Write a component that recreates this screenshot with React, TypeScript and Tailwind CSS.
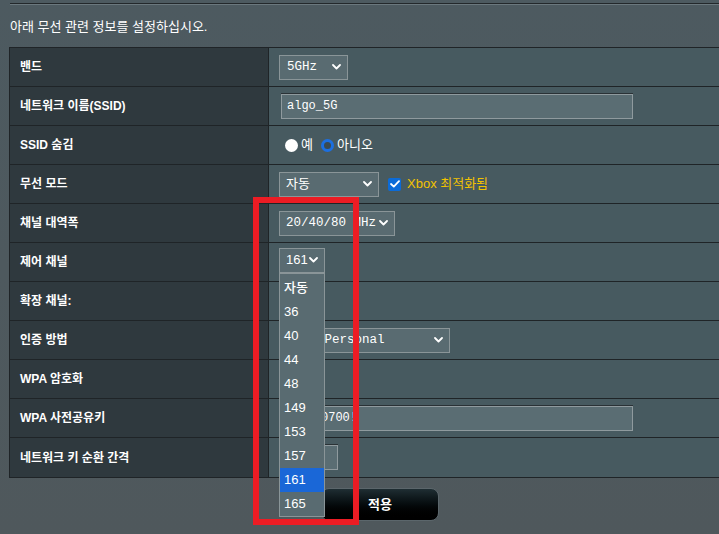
import { ReactNode } from "react";

const sans = "font-['Liberation_Sans','Noto_Sans_CJK_KR',sans-serif]";
const mono = "font-['Liberation_Mono','DejaVu_Sans_Mono',monospace]";

function Chevron() {
	return (
		<svg width="9" height="6" viewBox="0 0 9 6" fill="none">
			<path d="M1 1L4.5 4.5L8 1" stroke="white" strokeWidth="1.8" strokeLinecap="round" strokeLinejoin="round" />
		</svg>
	);
}

function Select({ width, children, className = "" }: { width: string; children: ReactNode; className?: string }) {
	return (
		<div
			className={`${width} h-[25px] bg-[#596b71] border border-[#8a9598] flex items-center justify-between pl-[6px] pr-[6px] text-white ${className}`}
		>
			<span className="whitespace-nowrap overflow-hidden">{children}</span>
			<Chevron />
		</div>
	);
}

function TextInput({ width, value, pad = "pl-[5px]" }: { width: string; value: string; pad?: string }) {
	return (
		<div
			className={`${width} h-[25px] ml-[2px] bg-[#5a6d73] border border-[#8f9a9e] shadow-[0_-1px_0_#2a3236] flex items-center ${pad} text-white text-[12px] whitespace-nowrap overflow-hidden ${mono}`}
		>
			{value}
		</div>
	);
}

function Row({ label, children, last = false }: { label: string; children?: ReactNode; last?: boolean }) {
	return (
		<div className={`h-[39px] flex ${last ? "" : "border-b border-[#1f2427]"}`}>
			<div className={`w-[259px] shrink-0 bg-[#2f393e] border-r border-[#1f2427] flex items-center pl-[10px] text-white text-[12px] font-semibold ${sans}`}>
				{label}
			</div>
			<div className="flex-1 bg-[#475a60] flex items-center pl-[10px] relative">{children}</div>
		</div>
	);
}

const channels = ["자동", "36", "40", "44", "48", "149", "153", "157", "161", "165"];

export default function App() {
	return (
		<div className={`w-[719px] h-[534px] relative overflow-hidden bg-gradient-to-b from-[#4d5a60] to-[#4f585c] ${sans}`}>
			{/* top rule */}
			<div className="pt-[3px] pl-[10px]">
				<div className="h-[1px] bg-[#23282b]" />
				<div className="h-[1px] bg-[#6b787e]" />
			</div>
			<div className="pl-[10px] pt-[12px] h-[42px] text-white text-[13px]">아래 무선 관련 정보를 설정하십시오.</div>

			<div className="ml-[9px] border border-r-0 border-[#1f2427]">
				<Row label="밴드">
					<Select width="w-[69px]" className={`text-[12.5px] pl-[7px] ${mono}`}>5GHz</Select>
				</Row>
				<Row label="네트워크 이름(SSID)">
					<TextInput width="w-[352px]" value="algo_5G" />
				</Row>
				<Row label="SSID 숨김">
					<div className="flex items-center text-white text-[13px] pl-[6px] gap-[3px]">
						<span className="w-[13px] h-[13px] rounded-full bg-white" />
						<span className="mr-[5px]">예</span>
						<span className="w-[13px] h-[13px] rounded-full border-[3px] border-[#1c6fe0] bg-[#3a4a50]" />
						<span>아니오</span>
					</div>
				</Row>
				<Row label="무선 모드">
					<Select width="w-[100px]" className="text-[13px]">자동</Select>
					<span className="ml-[9px] w-[13px] h-[13px] bg-[#0b6bd8] rounded-[2px] flex items-center justify-center">
						<svg width="10" height="8" viewBox="0 0 10 8" fill="none">
							<path d="M1 4L3.8 6.6L9 1.2" stroke="white" strokeWidth="1.8" strokeLinecap="round" strokeLinejoin="round" />
						</svg>
					</span>
					<span className="ml-[6px] text-[13px] text-[#f2c200]">Xbox 최적화됨</span>
				</Row>
				<Row label="채널 대역폭">
					<Select width="w-[116px]" className={`text-[12.5px] ${mono}`}>20/40/80 MHz</Select>
				</Row>
				<Row label="제어 채널">
					<div className="relative mb-[4px]">
						<Select width="w-[46px]" className="text-[13px] pl-[4px] pr-[5px]">161</Select>
						{/* open dropdown list */}
						<div className="absolute left-0 top-[25px] w-[46px] bg-[#596b71] border border-[#8a9598] pt-[2px] z-10">
							{channels.map((c) => (
								<div
									key={c}
									className={`h-[24px] flex items-center pl-[4px] text-[13px] font-medium text-white ${
										c === "161" ? "bg-[#1a67d7]" : ""
									}`}
								>
									{c}
								</div>
							))}
						</div>
					</div>
				</Row>
				<Row label="확장 채널:" />
				<Row label="인증 방법">
					<Select width="w-[171px]" className={`text-[12.5px] pl-[7px] ${mono}`}>WPA2-Personal</Select>
				</Row>
				<Row label="WPA 암호화">
					<Select width="w-[46px]" className={`text-[12.5px] ${mono}`}>AES</Select>
				</Row>
				<Row label="WPA 사전공유키">
					<TextInput width="w-[352px]" value="algo@0700!" pad="pl-[3px]" />
				</Row>
				<Row label="네트워크 키 순환 간격" last>
					<TextInput width="w-[57px]" value="3600" />
				</Row>
			</div>

			<div className="pl-[321px] pt-[10px]">
				<button className="w-[118px] h-[33px] rounded-[8px] border border-[#5b666b] bg-gradient-to-b from-[#1f2e33] to-[#000000] text-white text-[13px] font-bold">
					적용
				</button>
			</div>

			{/* red annotation box */}
			<div className="absolute left-[253px] top-[197px] w-[106px] h-[328px] border-[6px] border-[#ec1c24] z-20" />
		</div>
	);
}
